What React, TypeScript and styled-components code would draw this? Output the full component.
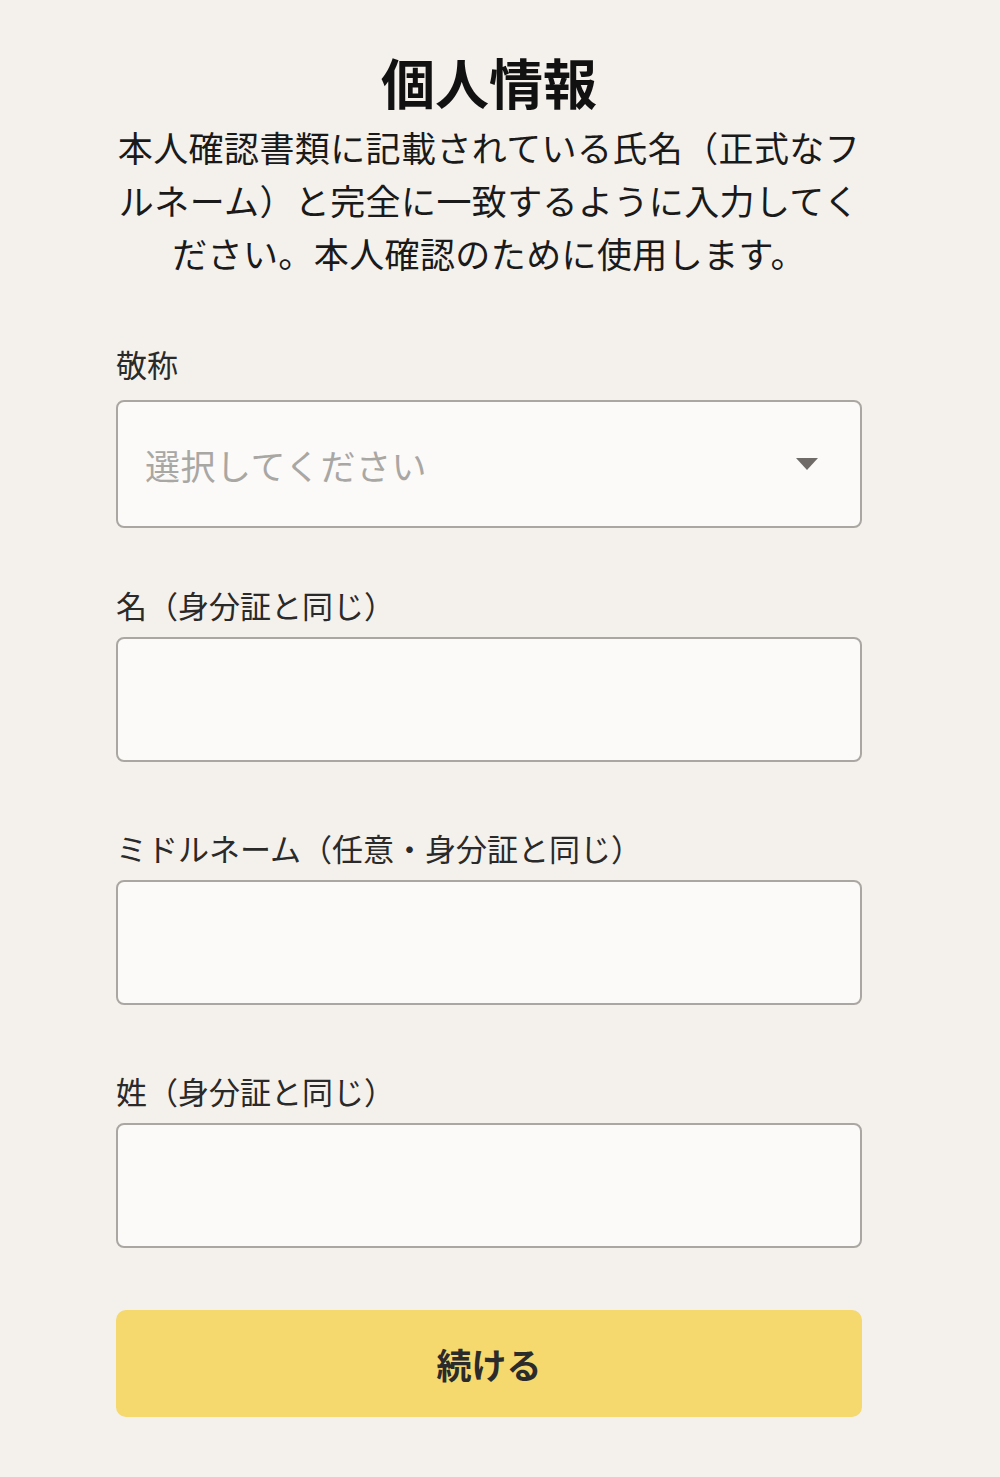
import * as React from 'react';
import styled, { createGlobalStyle } from 'styled-components';

const GlobalStyle = createGlobalStyle`
  html, body {
    margin: 0;
    padding: 0;
    background: #f4f1ed;
  }
  body {
    font-family: "Noto Sans CJK JP", "Noto Sans", sans-serif;
    color: #222;
  }
`;

interface FieldProps {
  label: string;
}

const TextField: React.FC<FieldProps> = ({ label }) => (
  <Field $gap={10} $after={64}>
    <Label>{label}</Label>
    <Input type='text' />
  </Field>
);

export default function App() {
  return (
    <>
      <GlobalStyle />
      <Page>
        <Form>
          <Header>
            <Title>個人情報</Title>
            <Lead>
              本人確認書類に記載されている氏名（正式なフルネーム）と完全に一致するように入力してください。本人確認のために使用します。
            </Lead>
          </Header>
          <Fields>
            <Field $gap={14} $after={55}>
              <Label>敬称</Label>
              <Select>
                <Placeholder>選択してください</Placeholder>
                <Caret viewBox='0 0 22 12' aria-hidden='true'>
                  <polygon points='0,0 22,0 11,12' />
                </Caret>
              </Select>
            </Field>
            <TextField label='名（身分証と同じ）' />
            <TextField label='ミドルネーム（任意・身分証と同じ）' />
            <TextField label='姓（身分証と同じ）' />
          </Fields>
          <SubmitButton type='button'>続ける</SubmitButton>
        </Form>
      </Page>
    </>
  );
}

const Page = styled.main`
  min-height: 1477px;
  padding: 44px 138px 0 116px;
  box-sizing: border-box;
`;

const Form = styled.div`
  width: 746px;
  display: flex;
  flex-direction: column;
`;

const Header = styled.header`
  display: flex;
  flex-direction: column;
  align-items: center;
  text-align: center;
`;

const Title = styled.h1`
  margin: 0;
  font-size: 54px;
  line-height: 76px;
  font-weight: 700;
  color: #111;
`;

const Lead = styled.p`
  margin: 0;
  font-size: 35px;
  letter-spacing: 0.4px;
  line-height: 53px;
  color: #1a1a1a;
`;

const Fields = styled.div`
  margin-top: 63px;
  display: flex;
  flex-direction: column;
`;

const Field = styled.div<{ $gap: number; $after: number }>`
  display: flex;
  flex-direction: column;
  gap: ${p => p.$gap}px;
  margin-bottom: ${p => p.$after}px;
  &:last-child {
    margin-bottom: 0;
  }
`;

const Label = styled.label`
  font-size: 31px;
  line-height: 44px;
  color: #2a2a2a;
`;

const boxStyle = `
  box-sizing: border-box;
  width: 100%;
  border: 2px solid #aaa7a3;
  border-radius: 8px;
  background: #fbfaf8;
`;

const Select = styled.div`
  ${boxStyle}
  height: 128px;
  padding: 0 42px 0 27px;
  display: flex;
  align-items: center;
  justify-content: space-between;
`;

const Placeholder = styled.span`
  font-size: 35px;
  letter-spacing: 0.5px;
  color: #a9a7a4;
`;

const Caret = styled.svg`
  width: 22px;
  height: 12px;
  fill: #6f6b68;
`;

const Input = styled.input`
  ${boxStyle}
  height: 125px;
  padding: 0 28px;
  font-size: 35px;
  font-family: inherit;
  outline: none;
`;

const SubmitButton = styled.button`
  margin-top: 62px;
  height: 107px;
  border: none;
  border-radius: 10px;
  background: #f5d86e;
  font-family: inherit;
  font-size: 35px;
  font-weight: 700;
  color: #2b2b2b;
  cursor: pointer;
`;
